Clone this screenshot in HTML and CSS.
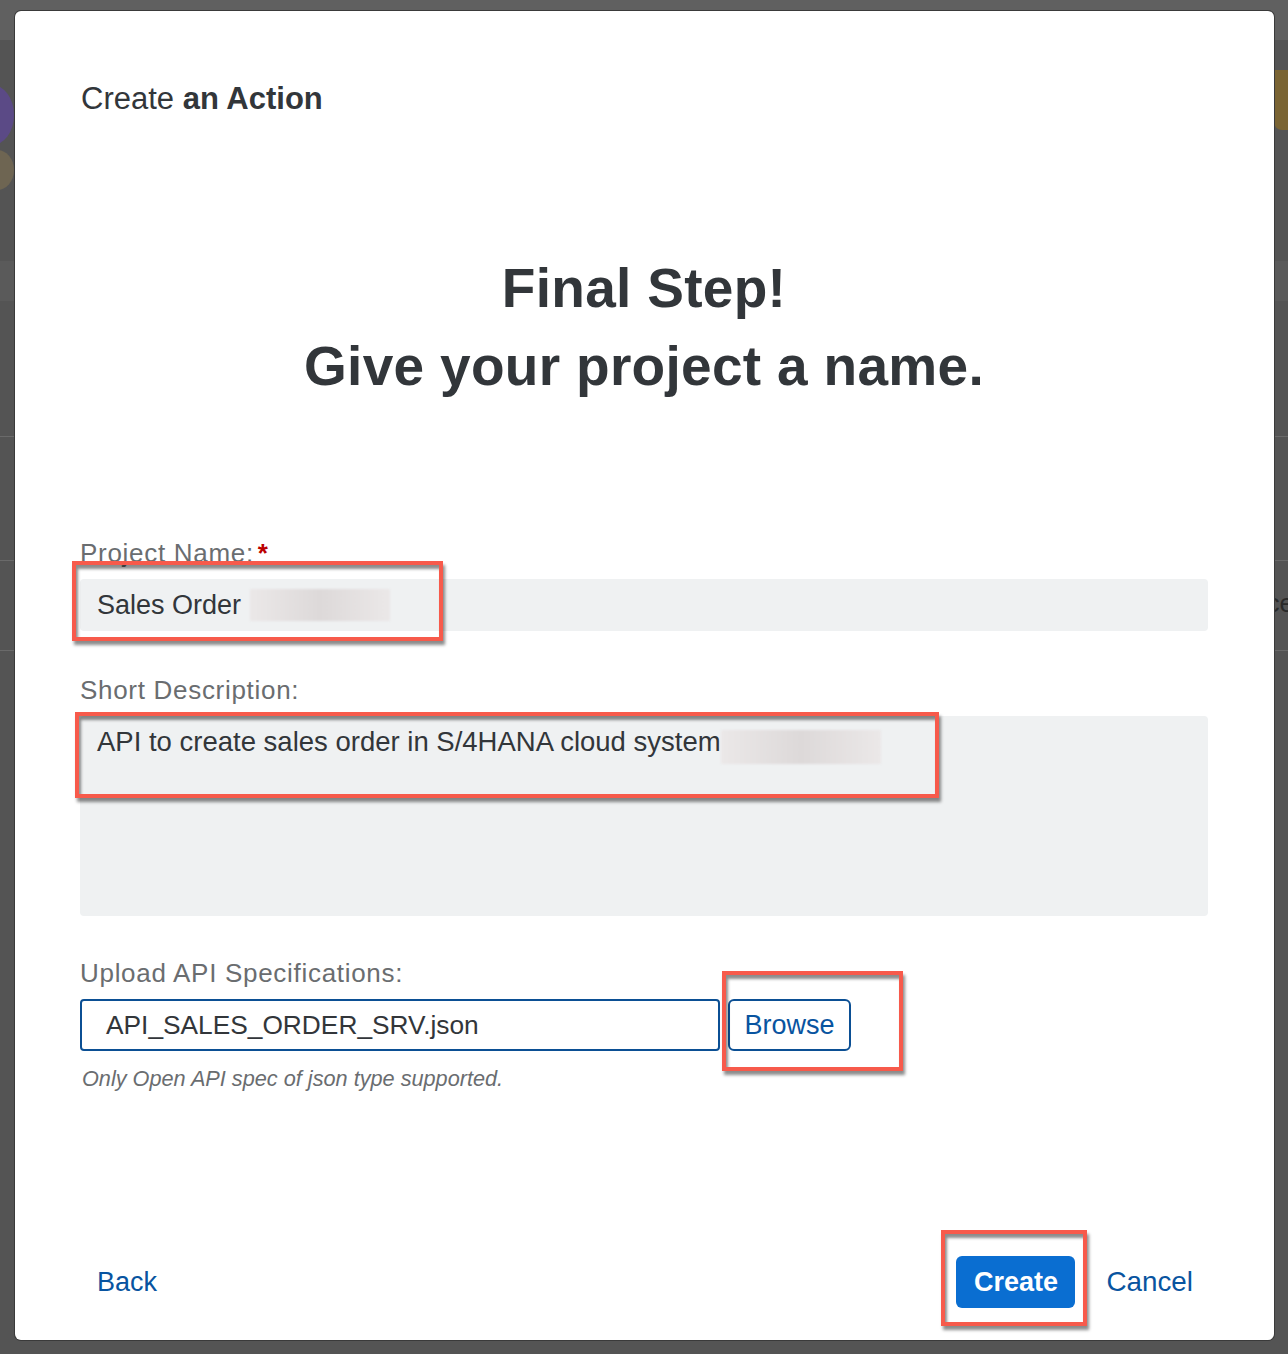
FILE: index.html
```html
<!DOCTYPE html>
<html>
<head>
<meta charset="utf-8">
<link rel="stylesheet" href="styles.css">
</head>
<body>
<div class="backdrop">
  <div class="bg-topbar"></div>
  <div class="bg-avatar"></div>
  <div class="bg-avatar2"></div>
  <div class="bg-badge"></div>
  <div class="bg-line l1"></div>
  <div class="bg-line l2"></div>
  <div class="bg-line l3"></div>
  <div class="bg-line l4"></div>
  <div class="bg-peek">ce</div>
</div>
<div class="dialog">
  <header class="dlg-header">Create <b>an Action</b></header>
  <div class="dlg-body">
    <h1 class="hero">Final Step!<br>Give your project a name.</h1>
    <div class="form">
      <div class="field">
        <label class="lbl">Project Name:<span class="req">*</span></label>
        <div class="input filled">
          <span class="val">Sales Order</span><span class="blur b1"></span>
        </div>
        <div class="mark m1"></div>
      </div>
      <div class="field">
        <label class="lbl">Short Description:</label>
        <div class="textarea filled">
          <span class="val">API to create sales order in S/4HANA cloud system</span><span class="blur b2"></span>
        </div>
        <div class="mark m2"></div>
      </div>
      <div class="field upload">
        <label class="lbl">Upload API Specifications:</label>
        <div class="file-row">
          <div class="file-input">API_SALES_ORDER_SRV.json</div>
          <button class="browse">Browse</button>
        </div>
        <div class="hint">Only Open API spec of json type supported.</div>
        <div class="mark m3"></div>
      </div>
    </div>
  </div>
  <footer class="dlg-footer">
    <a class="link">Back</a>
    <div class="right">
      <button class="primary">Create</button>
      <a class="link">Cancel</a>
      <div class="mark m4"></div>
    </div>
  </footer>
</div>
</body>
</html>
```
FILE: styles.css
```css
* { box-sizing: border-box; }
html, body { margin: 0; padding: 0; }
body {
  width: 1288px;
  height: 1354px;
  background: #545454;
  font-family: "Liberation Sans", Arial, sans-serif;
  position: relative;
  overflow: hidden;
  padding: 11px 14px 14px 15px;
}
.backdrop { position: absolute; inset: 0; }
.bg-topbar { position: absolute; left: 0; right: 0; top: 0; height: 40px; background: #606060; }
.bg-avatar { position: absolute; left: -30px; top: 85px; width: 44px; height: 60px; border-radius: 50%; background: #5b4a86; }
.bg-avatar2 { position: absolute; left: -20px; top: 150px; width: 34px; height: 40px; border-radius: 50%; background: #6e6552; }
.bg-badge { position: absolute; right: 0; top: 70px; width: 14px; height: 60px; background: #7a6433; border-radius: 0 0 0 8px; }
.bg-line { position: absolute; height: 1px; background: #6a6a6a; }
.l1 { left: 0; right: 0; top: 261px; height: 40px; background: #5a5a5a; }
.l2 { left: 0; right: 0; top: 436px; }
.l3 { left: 0; right: 0; top: 560px; }
.l4 { left: 0; right: 0; top: 650px; }
.bg-peek { position: absolute; right: -6px; top: 588px; color: #2a2a2a; font: 26px "Liberation Sans", sans-serif; }

.dialog {
  position: relative;
  width: 1259px;
  height: 1329px;
  background: #ffffff;
  border-radius: 6px;
  box-shadow: 0 0 0 1px #3a3a3a;
  display: flex;
  flex-direction: column;
}
.dlg-header {
  padding: 70px 0 0 66px;
  font-size: 31px;
  color: #32363a;
  line-height: 36px;
  height: 130px;
}
.dlg-header b { font-weight: bold; }
.dlg-body { flex: 1; padding: 0 66px 0 65px; }
.hero {
  margin: 108px 0 0;
  text-align: center;
  font-size: 55px;
  line-height: 78px;
  font-weight: bold;
  color: #32363a;
  letter-spacing: 0.3px;
}
.form { margin-top: 134px; display: flex; flex-direction: column; }
.field { position: relative; }
.lbl {
  display: block;
  font-size: 26px;
  letter-spacing: 0.7px;
  color: #6a6d70;
  line-height: 28px;
  margin-bottom: 12px;
}
.req { color: #bb0000; font-weight: bold; margin-left: 4px; }
.input, .textarea {
  background: #eff1f2;
  border-radius: 4px;
  font-size: 27px;
  color: #32363a;
  display: flex;
  align-items: center;
  padding: 0 17px;
}
.input { height: 52px; }
.textarea { height: 200px; align-items: flex-start; padding-top: 10px; font-size: 27.5px; }
.val { white-space: nowrap; }
.blur {
  display: inline-block;
  background: linear-gradient(90deg, #ebe8e8, #ddd9d9 50%, #ebe8e8);
  filter: blur(1px);
}
.b1 { width: 140px; height: 32px; margin-left: 9px; }
.b2 { width: 160px; height: 34px; margin-top: 4px; }
.field + .field { margin-top: 45px; }
.field.upload { margin-top: 43px; }
.file-row { display: flex; gap: 8px; }
.file-input {
  width: 640px;
  height: 52px;
  border: 2px solid #0b4f94;
  border-radius: 4px;
  padding-left: 24px;
  display: flex;
  align-items: center;
  font-size: 26.3px;
  color: #32363a;
}
.browse {
  height: 52px;
  width: 123px;
  border: 2px solid #0b4f94;
  background: #fff;
  border-radius: 6px;
  font-family: inherit;
  font-size: 27px;
  color: #0854a0;
  padding: 0;
}
.hint {
  margin-top: 15px;
  font-style: italic;
  font-size: 21.7px;
  color: #6a6d70;
  padding-left: 2px;
}
.dlg-footer {
  height: 116px;
  display: flex;
  align-items: center;
  justify-content: space-between;
  padding: 0 81px 0 82px;
}
.link { font-size: 27px; color: #0854a0; line-height: 30px; }
.right { position: relative; display: flex; align-items: center; gap: 31px; }
.primary {
  height: 52px;
  width: 119px;
  background: #0a6ed1;
  color: #fff;
  border: none;
  border-radius: 6px;
  font-family: inherit;
  font-weight: bold;
  font-size: 27px;
  padding: 0;
}
.right .link { font-size: 27.8px; }

.mark {
  position: absolute;
  border: 4px solid #f75a4b;
  box-shadow: 2px 4px 3px rgba(0,0,0,0.45), inset 2px 4px 3px rgba(0,0,0,0.45);
  pointer-events: none;
}
.m1 { left: -8px; top: 22px; width: 371px; height: 80px; }
.m2 { left: -5px; top: 36px; width: 864px; height: 86px; }
.m3 { left: 642px; top: 12px; width: 181px; height: 100px; }
.m4 { left: -15px; top: -26px; width: 146px; height: 96px; }
```
